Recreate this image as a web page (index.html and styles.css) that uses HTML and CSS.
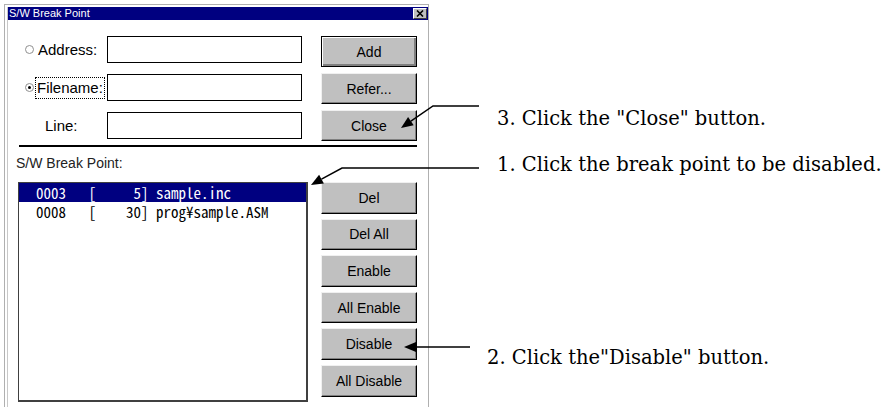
FILE: index.html
```html
<!DOCTYPE html>
<html lang="en">
<head>
  <meta charset="UTF-8">
  <title>S/W Break Point</title>
  <link rel="stylesheet" href="styles.css">
</head>
<body>
  <div class="page">
    <!-- Dialog -->
    <div class="window">
      <div class="frame">
        <div class="titlebar">
          <span class="title">S/W Break Point</span>
          <span class="close-box">
            <svg width="8" height="7" viewBox="0 0 8 7"><path d="M1 0.5 L7 6.5 M7 0.5 L1 6.5" stroke="#000" stroke-width="1.6"/></svg>
          </span>
        </div>
        <div class="content">
          <div class="top">
            <div class="form">
              <div class="row">
                <div class="label"><span class="radio"></span><span class="text">Address:</span></div>
                <div class="field"></div>
              </div>
              <div class="row">
                <div class="label"><span class="radio checked"></span><span class="text focus">Filename:</span></div>
                <div class="field"></div>
              </div>
              <div class="row">
                <div class="label"><span class="text plain">Line:</span></div>
                <div class="field"></div>
              </div>
            </div>
            <div class="buttons">
              <button class="btn default">Add</button>
              <button class="btn">Refer...</button>
              <button class="btn">Close</button>
            </div>
          </div>
          <div class="sep"></div>
          <div class="list-label">S/W Break Point:</div>
          <div class="bottom">
            <div class="listbox">
              <div class="item selected">0003   [     5] sample.inc</div>
              <div class="item">0008   [    30] prog¥sample.ASM</div>
            </div>
            <div class="buttons list-buttons">
              <button class="btn">Del</button>
              <button class="btn">Del All</button>
              <button class="btn">Enable</button>
              <button class="btn">All Enable</button>
              <button class="btn">Disable</button>
              <button class="btn">All Disable</button>
            </div>
          </div>
        </div>
      </div>
    </div>

    <!-- Callouts -->
    <svg class="arrows" width="890" height="407" viewBox="0 0 890 407">
      <polyline points="479,102 433,102 410.9,117.2" />
      <polygon points="401,124 413.7,121.3 408.1,113.1" />
      <polyline points="479,164 342,164 321.5,175.2" />
      <polygon points="311,181 323.9,179.6 319.1,170.8" />
      <line x1="470" y1="343" x2="416" y2="343" />
      <polygon points="404,343 416,338 416,348" />
    </svg>
    <p class="note note-close">3. Click the "Close" button.</p>
    <p class="note note-select">1. Click the break point to be disabled.</p>
    <p class="note note-disable">2. Click the"Disable" button.</p>
  </div>
</body>
</html>
```

FILE: styles.css
```css
/* General */
html, body {
  margin: 0;
  overflow: hidden;
  background: #fff;
}
.page {
  position: relative;
  width: 890px;
  height: 407px;
  font-family: "Liberation Sans", Arial, sans-serif;
  color: #000;
}
/* Dialog window */
.window {
  margin: 4px 0 0 4px;
  width: 425px;
  box-sizing: border-box;
  border: 1px solid #b0b0b0;
  border-bottom: none;
  padding: 2px 0 0 2px;
}
.frame {
  border-left: 1px solid #c8c8c8;
}
.titlebar {
  height: 13px;
  background: #000080;
  display: flex;
  align-items: center;
  justify-content: space-between;
  padding: 0 1px 0 1px;
}
.title {
  color: #fff;
  font-size: 11px;
  line-height: 13px;
}
.close-box {
  width: 12px;
  height: 9px;
  background: #c0c0c0;
  border: 1px solid;
  border-color: #fff #404040 #404040 #fff;
  display: flex;
  align-items: center;
  justify-content: center;
}
.content {
  padding: 16px 0 12px 0;
}
/* Upper part: fields and buttons */
.top {
  display: flex;
}
.form {
  display: flex;
  flex-direction: column;
  gap: 11px;
  padding-left: 17px;
}
.row {
  display: flex;
  align-items: center;
}
.label {
  width: 82px;
  display: flex;
  align-items: center;
  font-size: 15px;
}
.radio {
  width: 7px;
  height: 7px;
  border: 1px solid #909090;
  border-radius: 50%;
  background: #fff;
  margin-right: 4px;
  position: relative;
}
.radio.checked::after {
  content: "";
  position: absolute;
  left: 2px;
  top: 2px;
  width: 3px;
  height: 3px;
  border-radius: 50%;
  background: #000;
}
.text {
  line-height: 18px;
}
.text.focus {
  outline: 1px dotted #000;
  margin-left: -2px;
  padding: 1px 1px;
}
.text.plain {
  margin-left: 20px;
}
.field {
  width: 195px;
  height: 27px;
  box-sizing: border-box;
  border: 1px solid #000;
  background: #fff;
}
/* Buttons */
.buttons {
  display: flex;
  flex-direction: column;
  gap: 6px;
  margin-left: 19px;
}
.btn {
  width: 96px;
  height: 31px;
  box-sizing: border-box;
  background: #c0c0c0;
  border: 1px solid;
  border-color: #f0f0f0 #000 #000 #f0f0f0;
  box-shadow: inset -1px -1px #808080;
  font-family: "Liberation Sans", Arial, sans-serif;
  font-size: 14px;
  color: #000;
  padding: 0;
}
.btn.default {
  border-color: #000;
  box-shadow: inset 1px 1px #fff, inset -2px -2px #808080;
}
/* Separator and list */
.sep {
  margin: 4px 0 0 11px;
  width: 398px;
  height: 2px;
  background: #000;
}
.list-label {
  margin: 7px 0 0 8px;
  font-size: 14px;
  line-height: 18px;
  color: #222;
}
.bottom {
  display: flex;
  margin-top: 10px;
}
.listbox {
  margin-left: 10px;
  width: 290px;
  height: 220px;
  box-sizing: border-box;
  border: 1px solid #404040;
  border-right-width: 2px;
  border-bottom-width: 2px;
  background: #fff;
}
.item {
  white-space: pre;
  font-family: "Noto Sans Mono CJK JP", "Liberation Mono", monospace;
  font-size: 15px;
  line-height: 19px;
  padding-left: 17px;
}
.item.selected {
  background: #000080;
  color: #fff;
}
.list-buttons {
  margin-left: 13px;
  gap: 5px;
}
.list-buttons .btn {
  height: 31.6px;
}
/* Callouts */
.arrows {
  position: absolute;
  left: 0;
  top: 0;
  pointer-events: none;
}
.arrows polyline,
.arrows line {
  fill: none;
  stroke: #000;
  stroke-width: 1.5;
}
.arrows polygon {
  fill: #000;
}
.note {
  position: absolute;
  margin: 0;
  font-family: "DejaVu Serif", "Liberation Serif", serif;
  font-size: 19.5px;
  line-height: 24px;
  white-space: nowrap;
}
.note-close {
  left: 497px;
  top: 103px;
}
.note-select {
  left: 497px;
  top: 149px;
}
.note-disable {
  left: 487px;
  top: 342px;
}
```
